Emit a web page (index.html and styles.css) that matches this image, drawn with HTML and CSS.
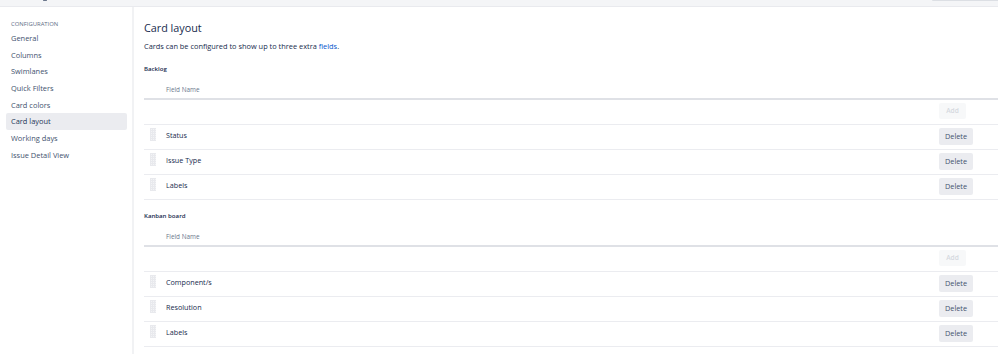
FILE: index.html
```html
<!DOCTYPE html>
<html lang="en">
<head>
<meta charset="utf-8">
<title>Card layout</title>
<link rel="stylesheet" href="styles.css">
</head>
<body>
<header class="topbar">
  <span class="topbar-mark"></span>
  <span class="topbar-btn"></span>
</header>
<div class="page">
  <nav class="sidebar">
    <div class="sidebar-heading">CONFIGURATION</div>
    <a class="nav-item">General</a>
    <a class="nav-item">Columns</a>
    <a class="nav-item">Swimlanes</a>
    <a class="nav-item">Quick Filters</a>
    <a class="nav-item">Card colors</a>
    <a class="nav-item is-selected">Card layout</a>
    <a class="nav-item">Working days</a>
    <a class="nav-item">Issue Detail View</a>
  </nav>
  <main class="content">
    <h1 class="title">Card layout</h1>
    <p class="desc">Cards can be configured to show up to three extra <a class="link">fields</a>.</p>

    <section class="section">
      <h2 class="section-title">Backlog</h2>
      <div class="table">
        <div class="row head"><span class="handle-space"></span><span class="name">Field Name</span></div>
        <div class="row add-row"><span class="handle-space"></span><span class="name"></span><span class="btn btn-disabled">Add</span></div>
        <div class="row"><span class="handle"></span><span class="name">Status</span><span class="btn">Delete</span></div>
        <div class="row"><span class="handle"></span><span class="name">Issue Type</span><span class="btn">Delete</span></div>
        <div class="row"><span class="handle"></span><span class="name">Labels</span><span class="btn">Delete</span></div>
      </div>
    </section>

    <section class="section">
      <h2 class="section-title">Kanban board</h2>
      <div class="table">
        <div class="row head"><span class="handle-space"></span><span class="name">Field Name</span></div>
        <div class="row add-row"><span class="handle-space"></span><span class="name"></span><span class="btn btn-disabled">Add</span></div>
        <div class="row"><span class="handle"></span><span class="name">Component/s</span><span class="btn">Delete</span></div>
        <div class="row"><span class="handle"></span><span class="name">Resolution</span><span class="btn">Delete</span></div>
        <div class="row"><span class="handle"></span><span class="name">Labels</span><span class="btn">Delete</span></div>
      </div>
    </section>
  </main>
</div>
</body>
</html>
```

FILE: styles.css
```css
* { box-sizing: border-box; }
html, body { margin: 0; padding: 0; }
body {
  font-family: "Open Sans", "Noto Sans", sans-serif;
  color: #172b4d;
  background: #fff;
  width: 998px;
  height: 354px;
  overflow: hidden;
}

.topbar {
  height: 7px;
  background: #f4f5f7;
  border-bottom: 1px solid #e9eaee;
  display: flex;
  justify-content: space-between;
  align-items: flex-start;
  overflow: hidden;
}
.topbar-mark {
  width: 4px;
  height: 1px;
  margin-left: 43px;
  background: #6b778c;
  border-radius: 1px;
}
.topbar-btn {
  width: 66px;
  height: 1px;
  background: #dcdfe4;
  border-radius: 0 0 0 2px;
}

.page {
  display: flex;
  height: 347px;
}

.sidebar {
  width: 134px;
  flex: none;
  border-right: 2px solid #f1f2f4;
  padding: 12px 5px 0 6px;
  display: flex;
  flex-direction: column;
}
.sidebar-heading {
  font-size: 5.9px;
  line-height: 11px;
  color: #5e6c84;
  padding-left: 5px;
}
.nav-item {
  display: block;
  height: 16.7px;
  line-height: 16.7px;
  font-size: 7.45px;
  color: #42526e;
  padding-left: 5px;
  border-radius: 2px;
}
.nav-item.is-selected {
  background: #ebecf0;
  color: #253858;
  font-weight: 500;
}

.content {
  flex: 1;
  padding: 12px 0 0 10px;
  min-width: 0;
}
.title {
  margin: 0;
  font-size: 10.8px;
  line-height: 17px;
  font-weight: 500;
  color: #172b4d;
}
.desc {
  margin: 4px 0 0;
  font-size: 7.4px;
  line-height: 12px;
  color: #172b4d;
}
.link { color: #0052cc; }

.section { margin-top: 11px; }
.section + .section { margin-top: 10px; }
.section-title {
  margin: 0;
  font-size: 6.1px;
  line-height: 12px;
  font-weight: 600;
  color: #172b4d;
}

.table { display: flex; flex-direction: column; }
.row {
  display: flex;
  align-items: flex-start;
  height: 25px;
  border-bottom: 1px solid #ebecf0;
  padding-top: 3px;
}
.row.head {
  height: 25px;
  padding-top: 8.5px;
  border-bottom: 2px solid #dfe1e6;
}
.row.add-row { height: 25px; padding-top: 3px; }

.handle-space { width: 22px; flex: none; }
.handle {
  flex: none;
  margin-left: 6px;
  width: 6px;
  height: 13px;
  background-image:
    linear-gradient(90deg, #e8e9ed 1px, transparent 1px),
    linear-gradient(#e8e9ed 1px, transparent 1px);
  background-size: 2px 2px;
  background-color: #f3f4f6;
}
.handle + .name { margin-left: 10px; }

.name {
  flex: 1;
  font-size: 7.2px;
  line-height: 12px;
  padding-top: 0.5px;
  color: #172b4d;
}
.row.head .name {
  font-size: 6.4px;
  color: #6b778c;
  padding-top: 0;
}

.btn {
  flex: none;
  margin-right: 25px;
  width: 34px;
  height: 17px;
  line-height: 17px;
  text-align: center;
  font-size: 7.3px;
  background: #ebecf0;
  color: #42526e;
  border-radius: 2px;
}
.btn-disabled {
  width: 27px;
  margin-right: 32px;
  height: 16px;
  line-height: 16px;
  background: #f7f8f9;
  color: #d5d9df;
  font-weight: 600;
  font-size: 6.6px;
}
```
